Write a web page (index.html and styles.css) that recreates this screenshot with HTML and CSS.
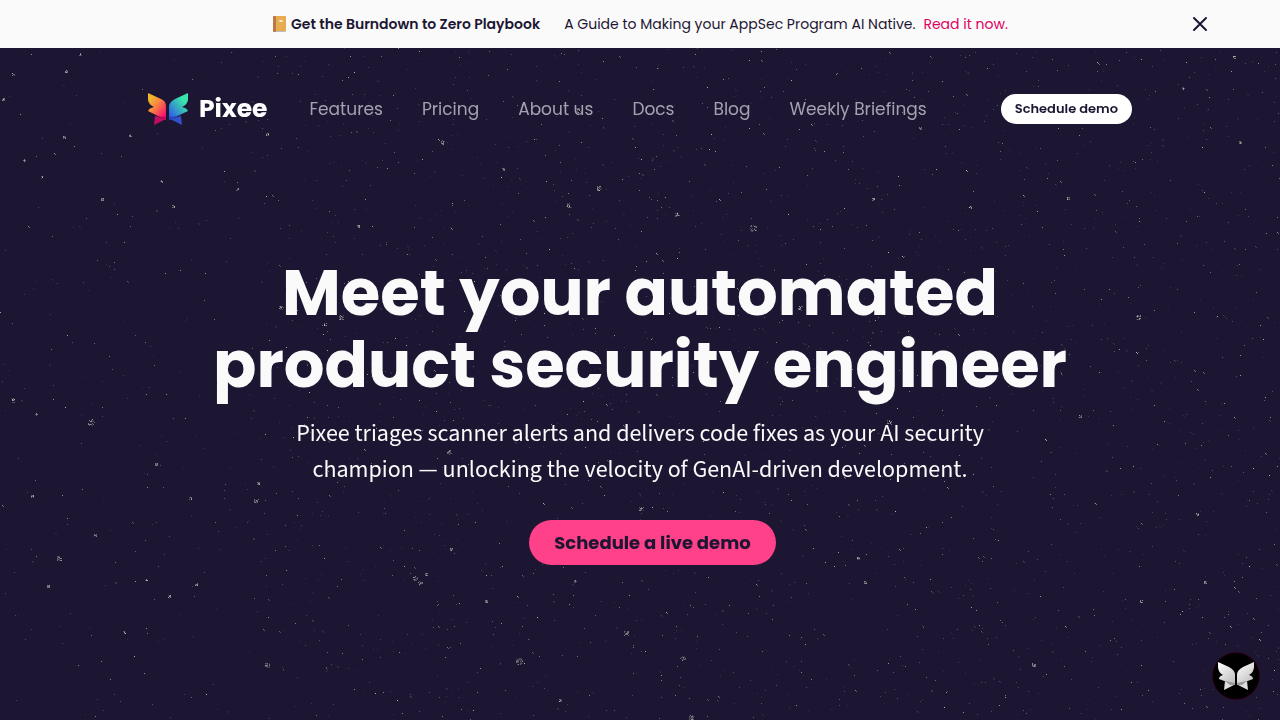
FILE: index.html
```html
<!DOCTYPE html>
<html lang="en">
<head>
  <meta charset="UTF-8">
  <meta name="viewport" content="width=device-width, initial-scale=1.0">
  <title>Pixee</title>
  <link rel="stylesheet" href="styles.css">
</head>
<body>
  <div class="banner" id="banner">
    <div class="banner-content">
      <strong class="banner-title">
        <svg width="15" height="17" viewBox="0 0 15 17" aria-hidden="true">
          <rect x="1" y="1" width="13" height="15" rx="1" fill="#b8bfc4"/>
          <rect x="1" y="0" width="13" height="15" rx="1" fill="#e9ab50"/>
          <rect x="1" y="0" width="3" height="16" rx="1" fill="#b87947"/>
          <ellipse cx="9" cy="5" rx="2" ry="1" fill="#fff3d6"/>
        </svg>
        Get the Burndown to Zero Playbook
      </strong>
      <span class="banner-text">A Guide to Making your AppSec Program AI Native.</span>
      <a href="#playbook" class="banner-link">Read it now.</a>
    </div>
    <button class="banner-close" id="banner-close" aria-label="Close banner">
      <svg width="16" height="16" viewBox="0 0 16 16" aria-hidden="true">
        <path d="M2 2L14 14M14 2L2 14" stroke="#1d1633" stroke-width="2" stroke-linecap="round"/>
      </svg>
    </button>
  </div>

  <div class="page">
    <canvas class="stars" id="stars"></canvas>

    <header class="header">
      <a href="#home" class="logo">
        <svg width="40" height="32" viewBox="0 0 40 32" aria-hidden="true">
          <defs>
            <linearGradient id="warm" x1="0.1" y1="0.1" x2="0.85" y2="0.95">
              <stop offset="0.1" stop-color="#f0b62d"/>
              <stop offset="0.45" stop-color="#f98442"/>
              <stop offset="1" stop-color="#fc0871"/>
            </linearGradient>
            <linearGradient id="cool" x1="0.9" y1="0.1" x2="0.15" y2="0.95">
              <stop offset="0.2" stop-color="#38e6ad"/>
              <stop offset="0.55" stop-color="#36aac1"/>
              <stop offset="1" stop-color="#305ce8"/>
            </linearGradient>
          </defs>
          <path d="M7 23L18 26L6 32Z" fill="#c20d62"/>
          <path d="M33 23L22 26L34 32Z" fill="#3150cb"/>
          <path d="M0 0L13 6Q18 8 18 13V27L0 18Q1 15 6 14Q1 12 0 7Z" fill="url(#warm)"/>
          <path d="M40 0L27 6Q21 9 21 14V27L40 18Q39 15 34 14Q39 12 40 7Z" fill="url(#cool)"/>
          <path d="M7 22L8 23L18 24V27Z" fill="#b60b5d"/>
          <path d="M33 22L32 23L21 24V27Z" fill="#2b47b7"/>
        </svg>
        <span>Pixee</span>
      </a>
      <nav class="nav">
        <a href="#features">Features</a>
        <a href="#pricing">Pricing</a>
        <a href="#about">About us</a>
        <a href="#docs">Docs</a>
        <a href="#blog">Blog</a>
        <a href="#briefings">Weekly Briefings</a>
      </nav>
      <button class="demo-button">Schedule demo</button>
    </header>

    <main class="hero">
      <h1>Meet your automated<br>product security engineer</h1>
      <p>Pixee triages scanner alerts and delivers code fixes as your AI security<br>champion — unlocking the velocity of GenAI-driven development.</p>
      <div class="hero-actions">
        <button class="cta">Schedule a live demo</button>
      </div>
    </main>
  </div>

  <button class="chat" aria-label="Open chat">
    <svg width="36" height="30" viewBox="0 0 36 30" aria-hidden="true">
      <defs>
        <linearGradient id="silver" x1="0" y1="0" x2="0.6" y2="1">
          <stop offset="0" stop-color="#ffffff"/>
          <stop offset="1" stop-color="#c4c4c4"/>
        </linearGradient>
      </defs>
      <path d="M7 20L16 24L6 29Z" fill="#dedede"/>
      <path d="M29 20L20 24L30 29Z" fill="#dedede"/>
      <path d="M0 1L11 6Q17 9 17 14V24L1 18Q1 15 5 14Q0 11 0 6Z" fill="url(#silver)"/>
      <path d="M36 1L25 6Q19 9 19 14V24L35 18Q35 15 31 14Q36 11 36 6Z" fill="url(#silver)"/>
      <path d="M7 20L17 22V24L12 24Z" fill="#999999"/>
      <path d="M29 20L19 22V24L24 24Z" fill="#999999"/>
    </svg>
  </button>

  <script src="script.js"></script>
</body>
</html>
```
FILE: styles.css
```css
* {
  box-sizing: border-box;
}

body {
  margin: 0;
  min-height: 100vh;
  display: flex;
  flex-direction: column;
  background-color: #1d1633;
  color: #fafafa;
  font-family: Poppins, Inter, sans-serif;
}

a {
  text-decoration: none;
}

button {
  border: none;
  padding: 0;
  font-family: inherit;
  cursor: pointer;
}

.banner {
  display: grid;
  grid-template-columns: 1fr auto 1fr;
  align-items: center;
  height: 48px;
  padding: 0 72px;
  background-color: #fafafa;
  color: #1d1633;
  font-size: 14px;
}

.banner.hidden {
  display: none;
}

.banner-content {
  grid-column: 2;
  display: flex;
  align-items: center;
}

.banner-title {
  display: flex;
  align-items: center;
  gap: 4px;
  margin-right: 24px;
  font-weight: 600;
}

.banner-link {
  margin-left: 8px;
  color: #e1005f;
}

.banner-close {
  justify-self: end;
  display: flex;
  background: none;
}

.page {
  position: relative;
  flex: 1;
  overflow: hidden;
}

.stars {
  position: absolute;
  top: 0;
  left: 0;
}

.header {
  position: relative;
  display: flex;
  align-items: center;
  max-width: 1080px;
  margin: 0 auto;
  padding: 44px 48px;
}

.logo {
  display: flex;
  align-items: center;
  gap: 11px;
  color: #ffffff;
  font-size: 25px;
  line-height: 34px;
  font-weight: 700;
}

.nav {
  display: flex;
  gap: 39px;
  margin-left: 42px;
}

.nav a {
  color: #a6a1b0;
  font-size: 17px;
}

.demo-button {
  height: 30px;
  margin-left: auto;
  padding: 0 14px;
  border-radius: 15px;
  background-color: #ffffff;
  color: #1d1633;
  font-size: 13px;
  font-weight: 600;
}

.hero {
  position: relative;
  padding: 87px 24px 48px;
  text-align: center;
}

.hero h1 {
  margin: 0;
  font-size: 64px;
  line-height: 72px;
  font-weight: 700;
}

.hero p {
  margin: 15px 0 32px;
  font-family: "Source Sans 3", "Noto Sans CJK SC", sans-serif;
  font-size: 24px;
  line-height: 36px;
}

.hero-actions {
  padding-left: 25px;
}

.cta {
  height: 45px;
  padding: 0 25px;
  border-radius: 23px;
  background-color: #ff4189;
  color: #1d1633;
  font-size: 18px;
  font-weight: 700;
}

.chat {
  position: fixed;
  right: 20px;
  bottom: 20px;
  display: flex;
  align-items: center;
  justify-content: center;
  width: 48px;
  height: 48px;
  border: 1px solid #30001a;
  border-radius: 50%;
  background-color: #000000;
}
```
FILE: script.js
```js
const canvas = document.getElementById("stars");
const banner = document.getElementById("banner");

// The brighter clusters of the sky: x, y, size
const clusters = [
  [80, 6, 2], [66, 23, 3], [13, 26, 2], [3, 51, 3], [64, 89, 3], [130, 87, 2],
  [267, 86, 3], [24, 112, 2], [42, 129, 2], [102, 151, 3], [173, 158, 3],
  [161, 133, 2], [237, 141, 2], [358, 178, 3], [281, 259, 4], [341, 269, 5],
  [325, 276, 3], [13, 352, 4], [36, 366, 2], [91, 374, 6], [156, 416, 3],
  [32, 448, 3], [95, 487, 2], [59, 510, 5], [48, 538, 3], [146, 532, 2],
  [196, 536, 3], [169, 548, 3], [258, 435, 3], [256, 453, 4], [190, 450, 2],
  [124, 584, 2], [267, 617, 5], [442, 94, 4], [568, 157, 4], [599, 140, 5],
  [677, 166, 4], [753, 180, 6], [578, 62, 4], [503, 121, 2], [449, 404, 4],
  [641, 461, 4], [420, 535, 4], [415, 530, 4], [451, 501, 3], [426, 526, 3],
  [486, 553, 3], [519, 613, 7], [626, 585, 5], [683, 610, 4], [691, 669, 5],
  [560, 652, 3], [575, 533, 2], [858, 510, 3], [873, 151, 3], [970, 159, 3],
  [1068, 150, 3], [1240, 94, 3], [1234, 9, 3], [1138, 269, 5], [800, 260, 4],
  [889, 374, 4], [1197, 466, 3], [1205, 534, 3], [1034, 617, 4], [865, 534, 3],
  [1141, 553, 3], [1080, 368, 3], [1183, 40, 2], [920, 80, 2]
];

// Seeded random so that the sky is the same on every load
let seed = 41;
function random() {
  seed = (seed * 16807) % 2147483647;
  return seed / 2147483647;
}

function dot(ctx, x, y, alpha) {
  ctx.fillStyle = `rgba(205, 205, 190, ${alpha})`;
  ctx.fillRect(Math.round(x), Math.round(y), 1, 1);
}

function drawStars() {
  seed = 41;
  canvas.width = canvas.parentElement.clientWidth;
  canvas.height = canvas.parentElement.clientHeight;
  const ctx = canvas.getContext("2d");
  const count = canvas.width * canvas.height / 280;

  for (let i = 0; i < count; i++) {
    const x = random() * canvas.width;
    const y = random() * canvas.height;
    const alpha = 0.1 + random() * random() * 0.85;
    // the left edge of the sky is emptier
    if (x < 260 && random() < 0.6) continue;
    dot(ctx, x, y, alpha);
    if (random() < 0.12) {
      dot(ctx, x + 1, y + 1, alpha * 0.7);
    }
  }

  clusters.forEach(([x, y, size]) => {
    for (let i = 0; i < size * 5; i++) {
      dot(ctx, x + (random() - 0.5) * size, y + (random() - 0.5) * size, 0.15 + random() * 0.35);
    }
  });
}

document.getElementById("banner-close").addEventListener("click", () => {
  banner.classList.add("hidden");
  drawStars();
});

window.addEventListener("resize", drawStars);
drawStars();
```
